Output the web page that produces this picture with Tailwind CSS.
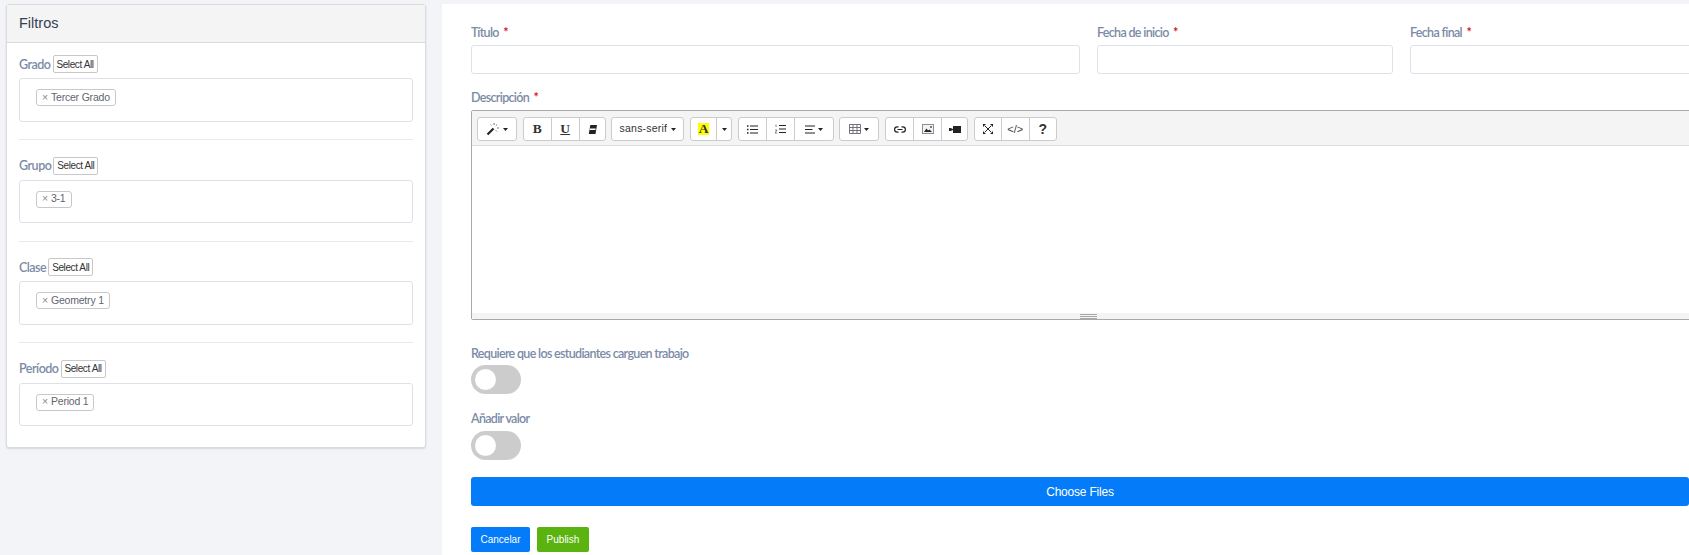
<!DOCTYPE html>
<html lang="en">
  <head>
    <meta charset="utf-8" />
    <meta content="width=device-width, initial-scale=1.0" name="viewport" />
    <title>Filtros</title>
    <script src="https://cdn.jsdelivr.net/npm/@tailwindcss/browser@4"></script>
  </head>
  <body class="h-[555px] w-[1689px] overflow-hidden bg-[#f2f4f8] font-['Liberation_Sans',sans-serif]">
    <div class="flex h-[555px] items-start pt-[4px] pl-[6px]">
      <!-- filtros -->
      <aside class="h-[444px] w-[420px] shrink-0 rounded-[3px] border border-[#d9dbdf] bg-white shadow-[0_1px_2px_rgba(0,0,0,0.12)]">
        <div class="flex h-[38px] items-center border-b border-[#d9dbdf] bg-[#f4f4f5] px-[12px] text-[14.5px] text-[#334152]">Filtros</div>
        <div class="px-[12px] pt-[12px]">
          <section>
            <div class="flex h-[18px] items-center gap-[2px]">
              <span class="pt-[2px] font-['Lato',sans-serif] text-[12.5px] font-semibold tracking-[-0.5px] text-[#7b8aa6]">Grado</span>
              <button class="h-[18px] w-[45px] rounded-[2px] border border-[#c8c8c8] bg-white text-[10px] tracking-[-0.4px] text-[#333]">Select All</button>
            </div>
            <div class="mt-[5px] flex h-[43.5px] items-start rounded-[3px] border border-[#dfe1ea] pt-[10px] pl-[16px]">
              <span class="flex h-[17px] items-center gap-[3px] rounded-[3px] border border-[#c8c8c8] px-[5px] text-[10.5px] tracking-[-0.2px] text-[#5f6670]"><span class="text-[#8a8a8a]">×</span>Tercer Grado</span>
            </div>
            <div class="mt-[17.5px] mb-[16.5px] h-px bg-[#e9ebef]"></div>
          </section>
          <section>
            <div class="flex h-[18px] items-center gap-[2px]">
              <span class="pt-[2px] font-['Lato',sans-serif] text-[12.5px] font-semibold tracking-[-0.5px] text-[#7b8aa6]">Grupo</span>
              <button class="h-[18px] w-[45px] rounded-[2px] border border-[#c8c8c8] bg-white text-[10px] tracking-[-0.4px] text-[#333]">Select All</button>
            </div>
            <div class="mt-[5px] flex h-[43.5px] items-start rounded-[3px] border border-[#dfe1ea] pt-[10px] pl-[16px]">
              <span class="flex h-[17px] items-center gap-[3px] rounded-[3px] border border-[#c8c8c8] px-[5px] text-[10.5px] tracking-[-0.2px] text-[#5f6670]"><span class="text-[#8a8a8a]">×</span>3-1</span>
            </div>
            <div class="mt-[17.5px] mb-[16.5px] h-px bg-[#e9ebef]"></div>
          </section>
          <section>
            <div class="flex h-[18px] items-center gap-[2px]">
              <span class="pt-[2px] font-['Lato',sans-serif] text-[12.5px] font-semibold tracking-[-0.5px] text-[#7b8aa6]">Clase</span>
              <button class="h-[18px] w-[45px] rounded-[2px] border border-[#c8c8c8] bg-white text-[10px] tracking-[-0.4px] text-[#333]">Select All</button>
            </div>
            <div class="mt-[5px] flex h-[43.5px] items-start rounded-[3px] border border-[#dfe1ea] pt-[10px] pl-[16px]">
              <span class="flex h-[17px] items-center gap-[3px] rounded-[3px] border border-[#c8c8c8] px-[5px] text-[10.5px] tracking-[-0.2px] text-[#5f6670]"><span class="text-[#8a8a8a]">×</span>Geometry 1</span>
            </div>
            <div class="mt-[17.5px] mb-[16.5px] h-px bg-[#e9ebef]"></div>
          </section>
          <section>
            <div class="flex h-[18px] items-center gap-[2px]">
              <span class="pt-[2px] font-['Lato',sans-serif] text-[12.5px] font-semibold tracking-[-0.5px] text-[#7b8aa6]">Período</span>
              <button class="h-[18px] w-[45px] rounded-[2px] border border-[#c8c8c8] bg-white text-[10px] tracking-[-0.4px] text-[#333]">Select All</button>
            </div>
            <div class="mt-[5px] flex h-[43.5px] items-start rounded-[3px] border border-[#dfe1ea] pt-[10px] pl-[16px]">
              <span class="flex h-[17px] items-center gap-[3px] rounded-[3px] border border-[#c8c8c8] px-[5px] text-[10.5px] tracking-[-0.2px] text-[#5f6670]"><span class="text-[#8a8a8a]">×</span>Period 1</span>
            </div>
          </section>
        </div>
      </aside>

      <!-- formulario -->
      <main class="ml-[16px] h-[551px] w-[1247px] shrink-0 overflow-hidden bg-white pl-[29px] font-['Lato',sans-serif] text-[12.5px] font-semibold tracking-[-0.68px] text-[#7b8aa6]">
        <div class="flex w-[1300px] gap-[17.5px] pt-[21px]">
          <div class="w-[608.5px]">
            <label class="block h-[20px] leading-[16px]">Título <span class="ml-[2px] text-[#d0021b]">*</span></label>
            <input type="text" class="block h-[29px] w-full rounded-[3px] border border-[#dfe1ea]" />
          </div>
          <div class="w-[295.5px]">
            <label class="block h-[20px] leading-[16px]">Fecha de inicio <span class="ml-[2px] text-[#d0021b]">*</span></label>
            <input type="text" class="block h-[29px] w-full rounded-[3px] border border-[#dfe1ea]" />
          </div>
          <div class="w-[340px]">
            <label class="block h-[20px] leading-[16px]">Fecha final <span class="ml-[2px] text-[#d0021b]">*</span></label>
            <input type="text" class="block h-[29px] w-full rounded-[3px] border border-[#dfe1ea]" />
          </div>
        </div>

        <label class="mt-[16px] block h-[20px] leading-[16px]">Descripción <span class="ml-[2px] text-[#d0021b]">*</span></label>

        <!-- editor -->
        <div class="h-[210px] w-[1240px] rounded-[2px] border border-[#a9a9a9]">
          <div class="flex h-[35px] items-start gap-[5.7px] border-b border-[#dddddd] bg-[#f4f4f4] pt-[6px] pl-[5px] font-['Liberation_Sans',sans-serif] text-[10.5px] font-normal tracking-normal text-[#333]">
            <div class="flex h-[24px] w-[40px] items-center justify-center gap-[3px] rounded-[3px] border border-[#ccc] bg-white">
              <svg width="14" height="14" viewBox="0 0 14 14"><path d="M1.500 12.500 7.500 6.500" stroke="#222" stroke-width="2.200" /><path d="M8 1v2M11 2.500 9.800 3.700M13 6h-2M11 9.500 9.800 8.300M4.500 2.500l1 1" stroke="#777" stroke-width="1" /></svg>
              <svg width="5" height="3" viewBox="0 0 5 3"><path d="M0 0h5L2.500 3z" fill="#222" /></svg>
            </div>
            <div class="flex h-[24px] overflow-hidden rounded-[3px] border border-[#ccc] bg-white">
              <span class="flex w-[28px] items-center justify-center border-r border-[#ccc] font-['Liberation_Serif',serif] text-[13.5px] font-bold">B</span>
              <span class="flex w-[28px] items-center justify-center border-r border-[#ccc] font-['Liberation_Serif',serif] text-[13.5px] font-bold underline">U</span>
              <span class="flex w-[25px] items-center justify-center">
                <svg width="9" height="9" viewBox="0 0 9 9"><path d="M2.300 0H9L7.500 9H0.800z" fill="#222" /><path d="M1.900 3.500H7.800L7.500 5H1.600z" fill="#fff" /></svg>
              </span>
            </div>
            <div class="flex h-[24px] w-[73px] items-center justify-center gap-[4px] rounded-[3px] border border-[#ccc] bg-white tracking-[0.2px]">
              sans-serif
              <svg width="5" height="3" viewBox="0 0 5 3"><path d="M0 0h5L2.500 3z" fill="#222" /></svg>
            </div>
            <div class="flex h-[24px] overflow-hidden rounded-[3px] border border-[#ccc] bg-white">
              <span class="flex w-[26px] items-center justify-center border-r border-[#ccc]"><span class="bg-[#ffff00] px-[1px] font-['Liberation_Serif',serif] text-[13.5px] leading-[12px] font-bold">A</span></span>
              <span class="flex w-[14px] items-center justify-center"><svg width="5" height="3" viewBox="0 0 5 3"><path d="M0 0h5L2.500 3z" fill="#222" /></svg></span>
            </div>
            <div class="flex h-[24px] overflow-hidden rounded-[3px] border border-[#ccc] bg-white">
              <span class="flex w-[28px] items-center justify-center border-r border-[#ccc]">
                <svg width="11" height="9" viewBox="0 0 11 9"><path d="M3 1h8M3 4.500h8M3 8h8" stroke="#222" stroke-width="1.200" /><path d="M0 1h1.500M0 4.500h1.500M0 8h1.500" stroke="#222" stroke-width="1.400" /></svg>
              </span>
              <span class="flex w-[28px] items-center justify-center border-r border-[#ccc]">
                <svg width="11" height="10" viewBox="0 0 11 10"><path d="M4 1.500h7M4 5h7M4 8.500h7" stroke="#222" stroke-width="1.200" /><path d="M1 0.500v2.500M0 6h2L0 9h2.200" stroke="#666" stroke-width="0.800" fill="none" /></svg>
              </span>
              <span class="flex w-[38px] items-center justify-center gap-[3px]">
                <svg width="10" height="9" viewBox="0 0 10 9"><path d="M0 1h10M0 4.500h7.500M0 8h10" stroke="#222" stroke-width="1.200" /></svg>
                <svg width="5" height="3" viewBox="0 0 5 3"><path d="M0 0h5L2.500 3z" fill="#222" /></svg>
              </span>
            </div>
            <div class="flex h-[24px] w-[40px] items-center justify-center gap-[3px] rounded-[3px] border border-[#ccc] bg-white">
              <svg width="12" height="10" viewBox="0 0 12 10" fill="none"><path d="M.5.500h11v9H.5zM.5 3.500h11M.5 6.500h11M4 .500v9M8 .500v9" stroke="#77707a" stroke-width="1" /></svg>
              <svg width="5" height="3" viewBox="0 0 5 3"><path d="M0 0h5L2.500 3z" fill="#222" /></svg>
            </div>
            <div class="flex h-[24px] overflow-hidden rounded-[3px] border border-[#ccc] bg-white">
              <span class="flex w-[28px] items-center justify-center border-r border-[#ccc]">
                <svg width="12" height="7" viewBox="0 0 12 7" fill="none"><path d="M4.500 .800H3.300a2.700 2.700 0 0 0 0 5.400h1.200M7.500 .800h1.200a2.700 2.700 0 0 1 0 5.400H7.500M3.500 3.500h5" stroke="#222" stroke-width="1.200" /></svg>
              </span>
              <span class="flex w-[28px] items-center justify-center border-r border-[#ccc]">
                <svg width="12" height="10" viewBox="0 0 12 10" fill="none"><rect x="0.500" y="0.500" width="11" height="9" fill="#eef4f8" stroke="#8a9098" /><path d="M2 8 4.500 4.500 6 6.500 7.500 5.500 10 8z" fill="#222" /><circle cx="9" cy="3" r="1" fill="#555" /></svg>
              </span>
              <span class="flex w-[25px] items-center justify-center">
                <svg width="12" height="7" viewBox="0 0 12 7"><rect x="4" y="0" width="8" height="7" fill="#222" /><path d="M0 2h1.500L4 3v1L1.500 5H0z" fill="#222" /></svg>
              </span>
            </div>
            <div class="flex h-[24px] overflow-hidden rounded-[3px] border border-[#ccc] bg-white">
              <span class="flex w-[27px] items-center justify-center border-r border-[#ccc]">
                <svg width="10" height="10" viewBox="0 0 10 10" fill="none"><path d="M2 2 8 8M8 2 2 8" stroke="#222" stroke-width="1" /><path d="M0 0h3L0 3zM10 0H7l3 3zM0 10h3L0 7zM10 10H7l3-3z" fill="#222" /></svg>
              </span>
              <span class="flex w-[28px] items-center justify-center border-r border-[#ccc] text-[11px] text-[#444]">&lt;/&gt;</span>
              <span class="flex w-[26px] items-center justify-center text-[14px] font-bold">?</span>
            </div>
          </div>
          <div class="h-[167px]"></div>
          <div class="h-[6px] bg-[#f4f4f4] pt-[1px] pl-[608px]">
            <div class="h-px w-[17px] bg-[#a9a9a9]"></div>
            <div class="mt-px h-px w-[17px] bg-[#a9a9a9]"></div>
            <div class="mt-px h-px w-[17px] bg-[#a9a9a9]"></div>
          </div>
        </div>

        <label class="mt-[26px] block h-[19px] leading-[16px]">Requiere que los estudiantes carguen trabajo</label>
        <div class="flex h-[29px] w-[50px] items-center rounded-full bg-[#cccccc] pl-[4px]"><span class="size-[21px] rounded-full bg-white"></span></div>

        <label class="mt-[17px] block h-[20px] leading-[16px]">Añadir valor</label>
        <div class="flex h-[29px] w-[50px] items-center rounded-full bg-[#cccccc] pl-[4px]"><span class="size-[21px] rounded-full bg-white"></span></div>

        <button class="mt-[17px] block h-[29px] w-[1218px] rounded-[3px] bg-[#047bf8] font-['Liberation_Sans',sans-serif] text-[12px] font-normal tracking-[-0.2px] text-white">Choose Files</button>

        <div class="mt-[21px] flex gap-[7px] font-['Liberation_Sans',sans-serif] text-[10px] font-normal tracking-normal text-white">
          <button class="h-[25px] w-[59px] rounded-[2px] bg-[#047bf8]">Cancelar</button>
          <button class="h-[25px] w-[52px] rounded-[2px] bg-[#5bb30f]">Publish</button>
        </div>
      </main>
    </div>
  </body>
</html>
